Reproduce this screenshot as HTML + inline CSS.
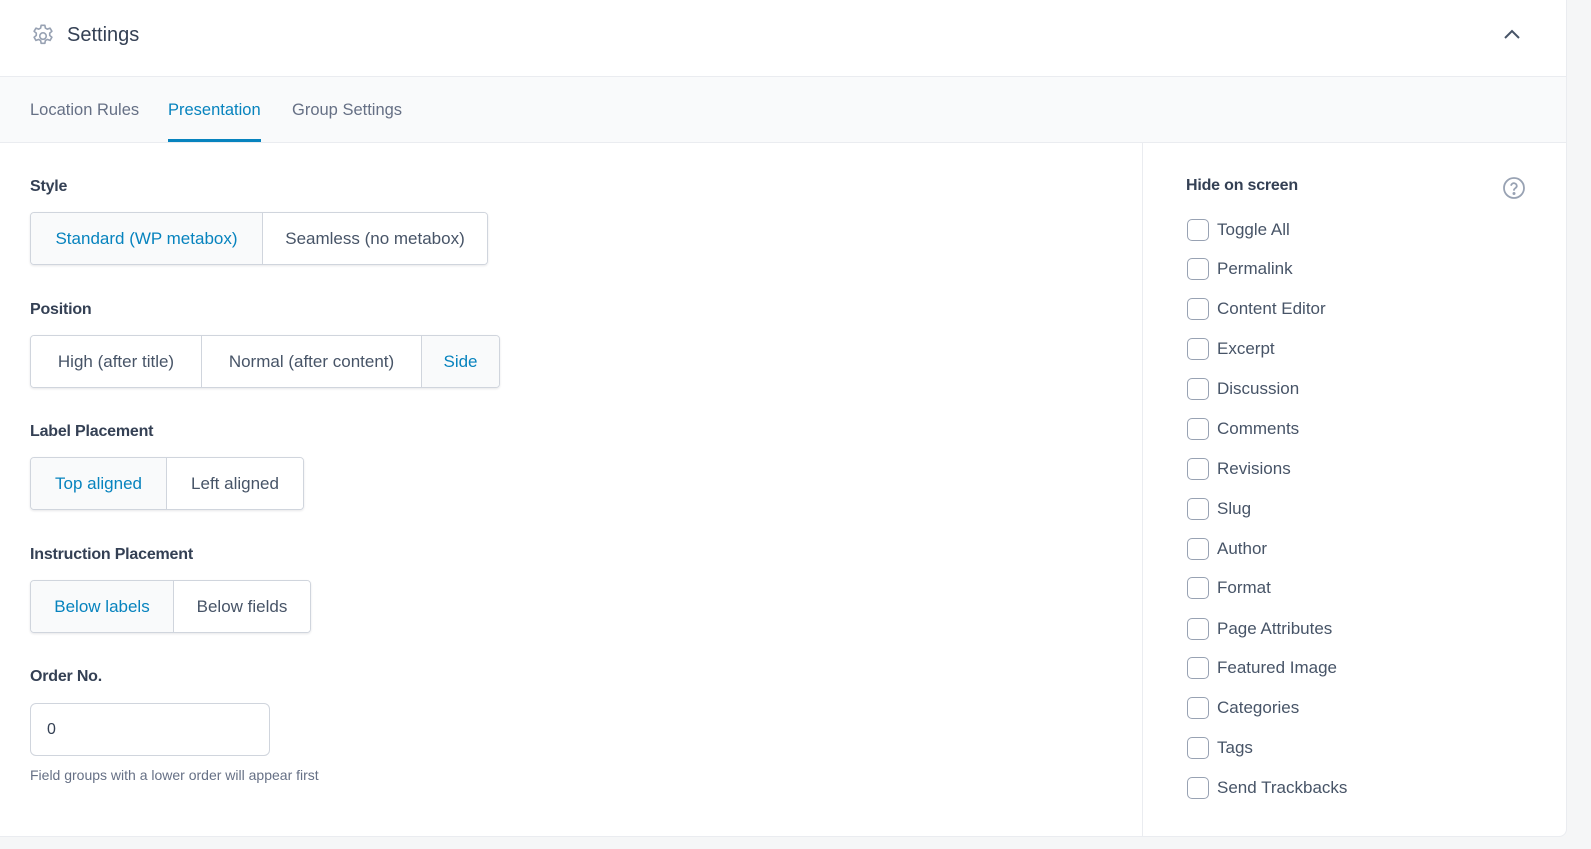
<!DOCTYPE html>
<html><head><meta charset="utf-8"><style>
*{box-sizing:border-box;margin:0;padding:0}
body{width:1591px;height:849px;background:#f5f6f7;font-family:"Liberation Sans",sans-serif;position:relative;overflow:hidden;color:#344054}
.card{position:absolute;left:0;top:0;width:1567px;height:837px;background:#fff;border-radius:0 0 8px 0;border-right:1px solid #eaecf0;border-bottom:1px solid #eaecf0;overflow:hidden}
.hdr{position:absolute;left:0;top:0;width:100%;height:77px;border-bottom:1px solid #eaecf0}
.hdr .t{position:absolute;left:67px;top:24px;font-size:20px;color:#344054}
.tabs{position:absolute;left:0;top:77px;width:100%;height:66px;background:#f9fafb;border-bottom:1px solid #eaecf0}
.tab{position:absolute;top:24px;font-size:16.5px;color:#667085}
.tab.a{color:#0783be}
.ul{position:absolute;left:168px;top:62px;width:93px;height:3px;background:#0783be}
.lbl{position:absolute;left:30px;font-size:16px;font-weight:bold;color:#344054;letter-spacing:-.2px}
.grp{position:absolute;left:30px;height:53px;border:1px solid #d0d5dd;border-radius:4px;display:flex;box-shadow:0 1px 2px rgba(16,24,40,.1);overflow:hidden}
.grp div{height:100%;display:flex;align-items:center;justify-content:center;font-size:17px;color:#475467;border-left:1px solid #d0d5dd;background:#fff}
.grp div:first-child{border-left:none}
.grp div.on{background:#f9fafb;color:#0783be}
.inp{position:absolute;left:30px;top:703px;width:240px;height:53px;border:1px solid #d0d5dd;border-radius:6px;font-size:16px;color:#344054;padding:17px 0 0 16px}
.help{position:absolute;left:30px;top:767px;font-size:14px;color:#667085}
.vdiv{position:absolute;left:1142px;top:143px;width:1px;height:700px;background:#eaecf0}
.hos{position:absolute;left:1186px;top:177px;font-size:16px;font-weight:bold;color:#344054;letter-spacing:-.2px}
.cb{position:absolute;left:1187px;font-size:17px;color:#475467;display:flex;align-items:center}
.cb span{width:22px;height:22px;border:1.5px solid #98a2b3;border-radius:5px;margin-right:8px;display:inline-block}
</style></head><body>
<div class="card">
<div class="hdr">
<svg style="position:absolute;left:30px;top:22px" width="26" height="26" viewBox="0 0 24 24" fill="none" stroke="#98a2b3" stroke-width="1.5" stroke-linejoin="round"><path d="M10.3 2h3.4l.5 2.6 1.8 1 2.5-.9 1.7 2.9-2 1.7v2.1l2 1.7-1.7 2.9-2.5-.9-1.8 1-.5 2.6h-3.4l-.5-2.6-1.8-1-2.5.9-1.7-2.9 2-1.7V9.3l-2-1.7 1.7-2.9 2.5.9 1.8-1z" transform="translate(0,1)"/><circle cx="12" cy="13" r="3"/></svg>
<div class="t">Settings</div>
<svg style="position:absolute;left:1503px;top:28px" width="18" height="12" viewBox="0 0 18 12" fill="none" stroke="#475467" stroke-width="2"><path d="M2 10l7-7 7 7"/></svg>
</div>
<div class="tabs">
<div class="tab" style="left:30px">Location Rules</div>
<div class="tab a" style="left:168px">Presentation</div>
<div class="tab" style="left:292px">Group Settings</div>
<div class="ul"></div>
</div>

<div class="lbl" style="top:178px">Style</div>
<div class="grp" style="top:212px"><div class="on" style="width:231px">Standard (WP metabox)</div><div style="width:225px">Seamless (no metabox)</div></div>
<div class="lbl" style="top:301px">Position</div>
<div class="grp" style="top:335px"><div style="width:170px">High (after title)</div><div style="width:220px">Normal (after content)</div><div class="on" style="width:78px">Side</div></div>
<div class="lbl" style="top:423px">Label Placement</div>
<div class="grp" style="top:457px"><div class="on" style="width:135px">Top aligned</div><div style="width:137px">Left aligned</div></div>
<div class="lbl" style="top:546px">Instruction Placement</div>
<div class="grp" style="top:580px"><div class="on" style="width:142px">Below labels</div><div style="width:137px">Below fields</div></div>
<div class="lbl" style="top:668px">Order No.</div>
<div class="inp">0</div>
<div class="help">Field groups with a lower order will appear first</div>

<div class="vdiv"></div>
<div class="hos">Hide on screen</div>
<svg style="position:absolute;left:1502px;top:176px" width="24" height="24" viewBox="0 0 24 24" fill="none" stroke="#98a2b3" stroke-width="1.8" stroke-linecap="round"><circle cx="12" cy="12" r="10"/><path d="M9.2 9a2.9 2.9 0 0 1 5.6 1c0 2-2.8 2.3-2.8 4"/><circle cx="12" cy="17.5" r=".6" fill="#98a2b3"/></svg>
<div class="cb" style="top:219px"><span></span>Toggle All</div>
<div class="cb" style="top:258px"><span></span>Permalink</div>
<div class="cb" style="top:298px"><span></span>Content Editor</div>
<div class="cb" style="top:338px"><span></span>Excerpt</div>
<div class="cb" style="top:378px"><span></span>Discussion</div>
<div class="cb" style="top:418px"><span></span>Comments</div>
<div class="cb" style="top:458px"><span></span>Revisions</div>
<div class="cb" style="top:498px"><span></span>Slug</div>
<div class="cb" style="top:538px"><span></span>Author</div>
<div class="cb" style="top:577px"><span></span>Format</div>
<div class="cb" style="top:618px"><span></span>Page Attributes</div>
<div class="cb" style="top:657px"><span></span>Featured Image</div>
<div class="cb" style="top:697px"><span></span>Categories</div>
<div class="cb" style="top:737px"><span></span>Tags</div>
<div class="cb" style="top:777px"><span></span>Send Trackbacks</div>
</div>
</body></html>
